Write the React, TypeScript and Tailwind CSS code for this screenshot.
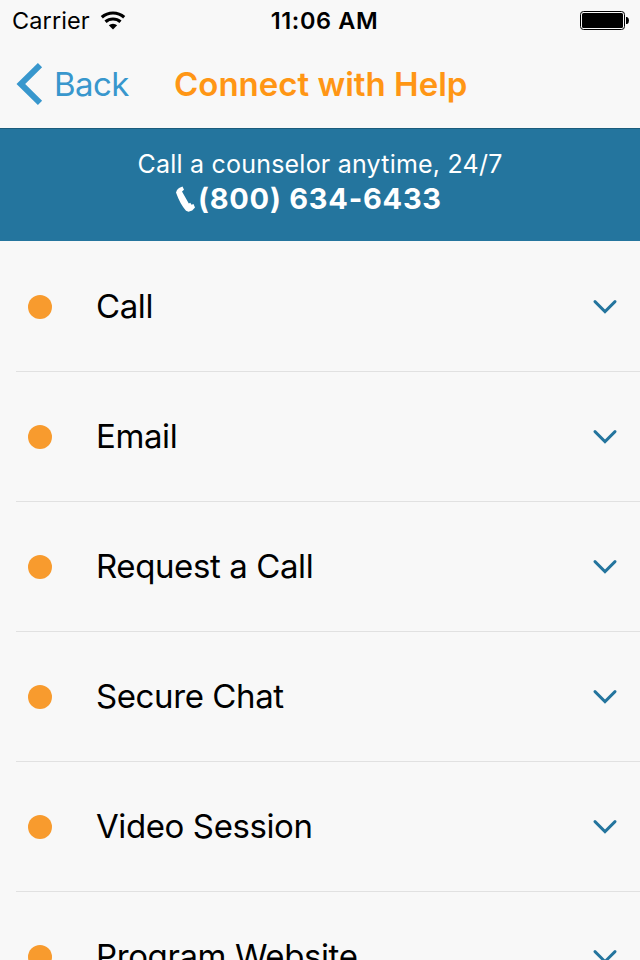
import { useState } from "react";

const options = ["Call", "Email", "Request a Call", "Secure Chat", "Video Session", "Program Website"];

function StatusBar() {
  return (
    <div className="flex h-10 items-center text-black">
      <div className="flex flex-1 items-center pl-3">
        <span className="pt-0.5 text-[23.5px] tracking-[0.1px]">Carrier</span>
        <svg className="ml-2.5" width="26" height="19" viewBox="0 0 26 19">
          <path d="M13 18.6 8.8 14.3a6.2 6.2 0 0 1 8.4 0z" fill="black" />
          <path d="M1.8 6.2a17 17 0 0 1 22.4 0M5.5 10.8a11.5 11.5 0 0 1 15 0" fill="none" stroke="black" strokeWidth="3.2" />
        </svg>
      </div>
      <span className="pt-0.5 pl-[7px] text-[23.5px] font-semibold tracking-[0.6px]">11:06 AM</span>
      <div className="flex flex-1 justify-end pt-0.5 pr-2.5">
        <svg width="50" height="20" viewBox="0 0 50 20">
          <rect x="0.5" y="0.5" width="44" height="18" rx="3" fill="none" stroke="black" />
          <rect x="2" y="2" width="41" height="15" rx="1.5" fill="black" />
          <path d="M46 6h1.2q1.8 1 1.8 3.5T47.2 13H46z" fill="black" />
        </svg>
      </div>
    </div>
  );
}

export default function App() {
  const [selected, setSelected] = useState("");

  return (
    <div className="h-[960px] w-[640px] overflow-hidden bg-[#f8f8f8] font-[Inter,sans-serif]">
      <StatusBar />

      <header className="flex h-[88px] items-center pl-4">
        <button className="flex items-center text-[#3897cd]">
          <svg width="27" height="42" viewBox="0 0 27 42">
            <path d="M24 2.2 4.8 21 24 39.8" fill="none" stroke="currentColor" strokeWidth="6" />
          </svg>
          <span className="ml-[11px] w-[75px] pt-0.5 text-left text-[33px] tracking-[-0.6px]">Back</span>
        </button>
        <h1 className="ml-[45px] pt-0.5 text-[33px] font-semibold text-[#ff9615]">Connect with Help</h1>
      </header>

      <section className="h-[113px] border-t border-[#1b5c7c] bg-[#24759e] pt-[19px] text-center text-white">
        <p className="text-[25px] leading-8 tracking-[0.22px]">Call a counselor anytime, 24/7</p>
        <div className="flex items-center pt-px pl-[175px]">
          <svg width="22" height="28" viewBox="0 0 22 28">
            <path
              d="M1 7.5Q1.5 4.5 4 3L7.5 1.5 9 4.8 7 6.5l6.8 12 1.5-.8 1.2 2 2-.7 1.5 3.5-2.8 3-3.7 1.3-2.5-1Q5 19 1 7.5"
              fill="white"
            />
          </svg>
          <span className="ml-px text-[29px] leading-9 font-bold tracking-[0.75px]">(800) 634-6433</span>
        </div>
      </section>

      <ul>
        {options.map((option) => (
          <li key={option} className="h-[130px] pl-4">
            <button
              className="flex h-[131px] w-full items-center border-b border-[#e1e1e1] pt-0.5 pr-[23px] pl-3 text-left"
              onClick={() => setSelected(option)}
              aria-pressed={selected === option}
            >
              <span className="h-6 w-6 rounded-full bg-[#f89b2e]" />
              <span className="ml-11 flex-1 text-[33px] tracking-[-0.4px]">{option}</span>
              <svg width="24" height="16" viewBox="0 0 24 16">
                <path d="m2 2.6 10 10 10-10" fill="none" stroke="#24759e" strokeWidth="2.9" strokeLinecap="round" />
              </svg>
            </button>
          </li>
        ))}
      </ul>
    </div>
  );
}
